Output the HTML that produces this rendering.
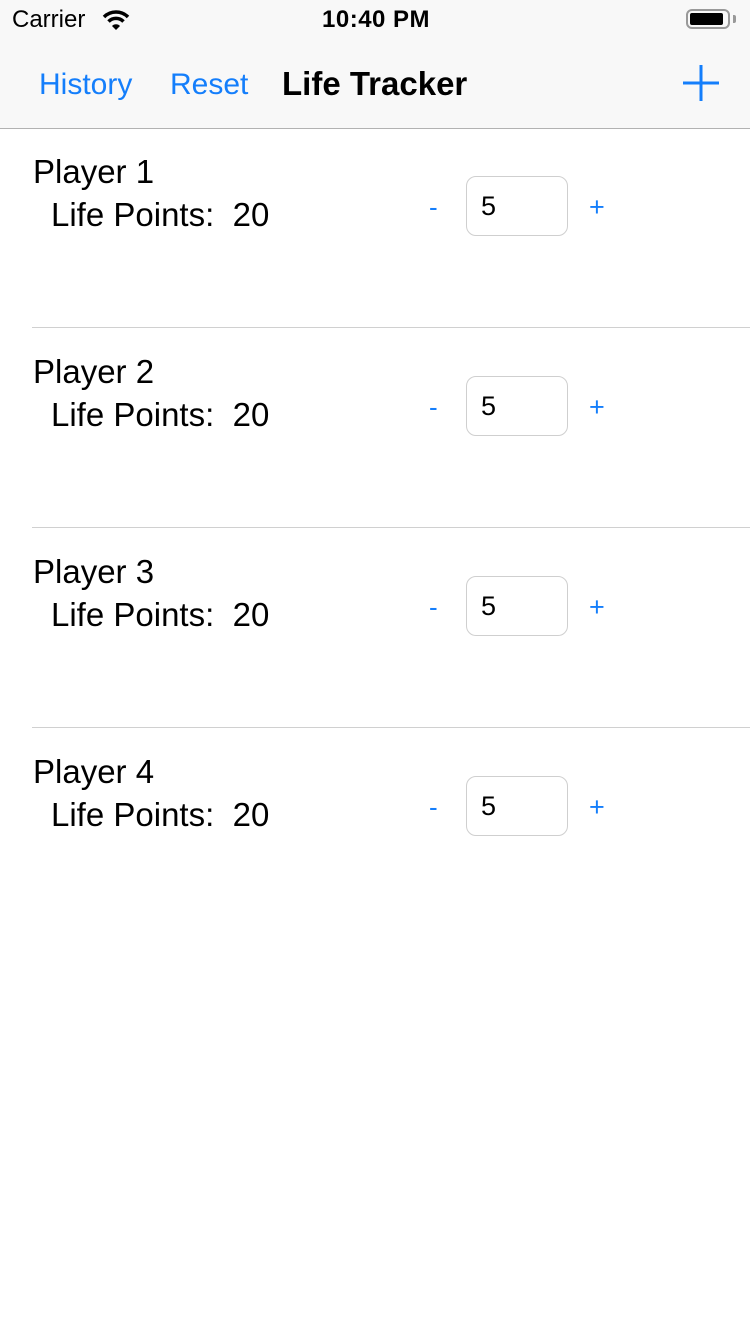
<!DOCTYPE html>
<html><head><meta charset="utf-8"><style>
body{margin:0;width:750px;height:1334px;background:#fff;font-family:"Liberation Sans",sans-serif;position:relative;overflow:hidden}
.a{position:absolute;white-space:nowrap;line-height:1}
.nav{position:absolute;left:0;top:0;width:750px;height:128px;background:#f8f8f8;border-bottom:1px solid #b2b2b2}
.blue{color:#147efb}
.sep{position:absolute;left:32px;right:0;height:1px;background:#d0d0d0}
.box{position:absolute;left:466px;width:100px;height:58px;border:1px solid #cfcfcf;border-radius:10px;box-sizing:content-box}
.p{font-size:33px}
</style></head><body>
<div class="nav"></div>
<div class="a" style="left:12px;top:8px;font-size:24px">Carrier</div>
<svg class="a" style="left:102px;top:9px" width="28" height="22" viewBox="0 0 28 22"><path d="M2 8 A17 17 0 0 1 26 8" stroke="#000" stroke-width="3.5" fill="none"/><path d="M6.5 12.5 A10.5 10.5 0 0 1 21.5 12.5" stroke="#000" stroke-width="3.5" fill="none"/><path d="M10 17 L14 21 L18 17 A5.5 5.5 0 0 0 10 17Z" fill="#000"/></svg>
<div class="a" style="left:322px;top:8px;font-size:24px;font-weight:bold;letter-spacing:0.5px">10:40 PM</div>
<div class="a" style="left:686px;top:9px;width:44px;height:20px;border:2px solid #999;border-radius:6px;box-sizing:border-box"></div>
<div class="a" style="left:690px;top:13px;width:33px;height:12px;background:#000;border-radius:2px"></div>
<div class="a" style="left:733px;top:15px;width:3px;height:8px;background:#999;border-radius:0 2px 2px 0"></div>
<div class="a blue" style="left:39px;top:70px;font-size:30px">History</div>
<div class="a blue" style="left:170px;top:70px;font-size:30px">Reset</div>
<div class="a" style="left:282px;top:67px;font-size:33px;font-weight:bold">Life Tracker</div>
<svg class="a" style="left:683px;top:65px" width="36" height="36"><path d="M18 0V36M0 18H36" stroke="#147efb" stroke-width="3"/></svg>

<div class="a p" style="left:33px;top:155px">Player 1</div>
<div class="a p" style="left:51px;top:198px">Life Points:&nbsp; 20</div>
<div class="a blue" style="left:429px;top:194px;font-size:26px">-</div>
<div class="box" style="top:176px"></div><div class="a" style="left:481px;top:193px;font-size:27px">5</div>
<div class="a blue" style="left:589px;top:194px;font-size:27px">+</div>
<div class="sep" style="top:327px"></div>

<div class="a p" style="left:33px;top:355px">Player 2</div>
<div class="a p" style="left:51px;top:398px">Life Points:&nbsp; 20</div>
<div class="a blue" style="left:429px;top:394px;font-size:26px">-</div>
<div class="box" style="top:376px"></div><div class="a" style="left:481px;top:393px;font-size:27px">5</div>
<div class="a blue" style="left:589px;top:394px;font-size:27px">+</div>
<div class="sep" style="top:527px"></div>

<div class="a p" style="left:33px;top:555px">Player 3</div>
<div class="a p" style="left:51px;top:598px">Life Points:&nbsp; 20</div>
<div class="a blue" style="left:429px;top:594px;font-size:26px">-</div>
<div class="box" style="top:576px"></div><div class="a" style="left:481px;top:593px;font-size:27px">5</div>
<div class="a blue" style="left:589px;top:594px;font-size:27px">+</div>
<div class="sep" style="top:727px"></div>

<div class="a p" style="left:33px;top:755px">Player 4</div>
<div class="a p" style="left:51px;top:798px">Life Points:&nbsp; 20</div>
<div class="a blue" style="left:429px;top:794px;font-size:26px">-</div>
<div class="box" style="top:776px"></div><div class="a" style="left:481px;top:793px;font-size:27px">5</div>
<div class="a blue" style="left:589px;top:794px;font-size:27px">+</div>
</body></html>
